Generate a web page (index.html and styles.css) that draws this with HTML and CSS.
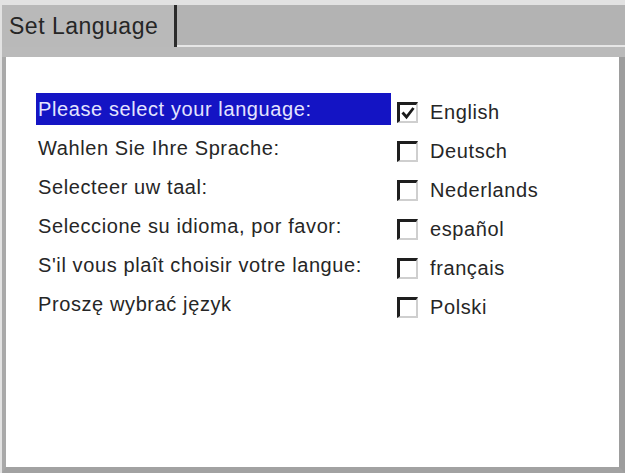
FILE: index.html
```html
<!DOCTYPE html>
<html lang="en">
<head>
<meta charset="utf-8">
<title>Set Language</title>
<link rel="stylesheet" href="styles.css">
</head>
<body>
<div class="window">
  <div class="tabbar">
    <div class="tab">Set Language</div>
    <div class="tab-filler"></div>
  </div>
  <div class="tab-strip"></div>
  <div class="panel">
    <div class="lang-grid">
      <div class="prompt selected">Please select your language:</div>
      <div class="option"><span class="box checked"><svg viewBox="0 0 16 16" width="16" height="16"><path d="M2.5 7.5 L6.5 12 L13.5 3" fill="none" stroke="#1a1a1a" stroke-width="2.8"/></svg></span><span class="label">English</span></div>

      <div class="prompt">Wahlen Sie Ihre Sprache:</div>
      <div class="option"><span class="box"></span><span class="label">Deutsch</span></div>

      <div class="prompt">Selecteer uw taal:</div>
      <div class="option"><span class="box"></span><span class="label">Nederlands</span></div>

      <div class="prompt">Seleccione su idioma, por favor:</div>
      <div class="option"><span class="box"></span><span class="label">español</span></div>

      <div class="prompt">S'il vous plaît choisir votre langue:</div>
      <div class="option"><span class="box"></span><span class="label">français</span></div>

      <div class="prompt">Proszę wybrać język</div>
      <div class="option"><span class="box"></span><span class="label">Polski</span></div>
    </div>
  </div>
</div>
</body>
</html>
```

FILE: styles.css
```css
html, body {
  margin: 0;
  padding: 0;
  background: #e2e2e2;
}

.window {
  width: 625px;
  height: 473px;
  box-sizing: border-box;
  padding: 5px 0 0 2px;
  display: flex;
  flex-direction: column;
  background: #e2e2e2;
  font-family: "Liberation Sans", Arial, sans-serif;
  color: #262626;
}

/* tab row */
.tabbar {
  display: flex;
  height: 42px;
  flex: none;
}

.tab {
  width: 165px;
  padding-left: 7px;
  background: #b9b9b9;
  border-right: 3px solid #2b2b2b;
  font-size: 23px;
  letter-spacing: 0.5px;
  line-height: 42px;
  color: #262626;
}

.tab-filler {
  flex: 1;
  background: #b3b3b3;
  border-bottom: 2px solid #e6e6e6;
}

.tab-strip {
  height: 10px;
  flex: none;
  background: #bababa;
}

/* white page under the tab */
.panel {
  flex: 1;
  background: #ffffff;
  border-left: 4px solid #a9a9a9;
  border-right: 6px solid #9d9d9d;
  border-bottom: 6px solid #a2a2a2;
  padding: 36px 0 0 30px;
}

.lang-grid {
  display: grid;
  grid-template-columns: 355px auto;
  grid-auto-rows: 39px;
  align-items: start;
  font-size: 20px;
  letter-spacing: 0.6px;
}

.prompt {
  height: 32px;
  line-height: 33px;
  padding-left: 2px;
  white-space: nowrap;
}

.prompt.selected {
  background: #1414c4;
  color: #e4e4ff;
}

.option {
  height: 39px;
  display: flex;
  align-items: center;
  padding-left: 6px;
}

.box {
  width: 16px;
  height: 16px;
  border-top: 3px solid #1e1e1e;
  border-left: 3px solid #1e1e1e;
  border-right: 2px solid #cfcfcf;
  border-bottom: 2px solid #cfcfcf;
  background: #fff;
  margin-right: 12px;
  display: flex;
  align-items: center;
  justify-content: center;
  flex: none;
}

.box svg {
  display: block;
}

.label {
  white-space: nowrap;
}
```
